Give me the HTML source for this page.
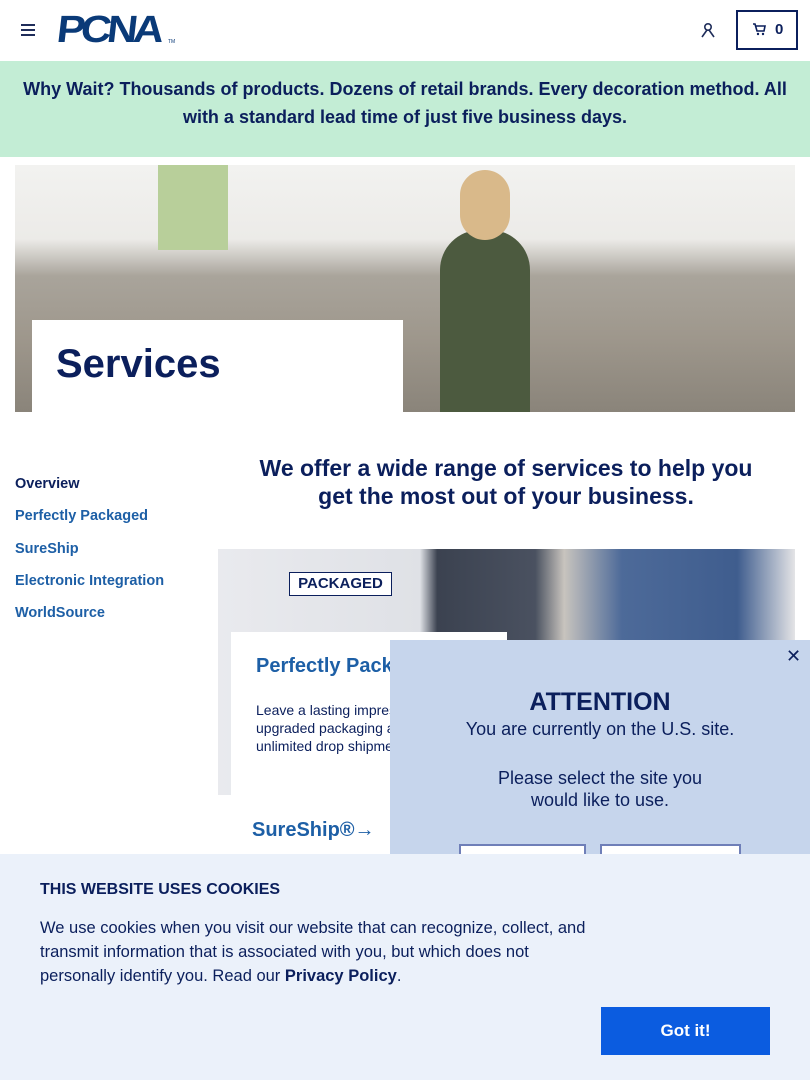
<!DOCTYPE html>
<html><head><meta charset="utf-8"><style>
*{margin:0;padding:0;box-sizing:border-box}
body{width:810px;height:1080px;overflow:hidden;position:relative;font-family:"Liberation Sans","DejaVu Sans",sans-serif;background:#fff;color:#0b1f5c}
.abs{position:absolute}
</style></head><body>
<div class="abs" style="left:21px;top:24px;width:14px;height:12px;border-top:2px solid #1f2d5a;border-bottom:2px solid #1f2d5a"><div style="margin-top:3px;height:2px;background:#1f2d5a"></div></div>
<div class="abs" style="left:57px;top:9px;font:900 38px 'Liberation Sans',sans-serif;color:#0a3a78;letter-spacing:-4px;transform:scaleX(1.12) skewX(-6deg);transform-origin:left">PCNA</div>
<div class="abs" style="left:168px;top:39px;font-size:5px;color:#0a3a78">TM</div>
<svg class="abs" style="left:700px;top:22px" width="16" height="16" viewBox="0 0 16 16"><circle cx="8" cy="5" r="3.2" fill="none" stroke="#1f2d5a" stroke-width="1.6"/><path d="M2 15 L7 8 M14 15 L9 8" stroke="#1f2d5a" stroke-width="1.6" fill="none"/></svg>
<div class="abs" style="left:736px;top:10px;width:62px;height:40px;border:2px solid #0b1f5c"></div>
<svg class="abs" style="left:752px;top:23px" width="14" height="13" viewBox="0 0 14 13"><path d="M1 1h2l2 7h7l1-5H4" fill="none" stroke="#0b1f5c" stroke-width="1.6"/><circle cx="6" cy="11" r="1.2" fill="#0b1f5c"/><circle cx="11" cy="11" r="1.2" fill="#0b1f5c"/></svg>
<div class="abs" style="left:775px;top:21px;font-weight:700;font-size:15px;color:#0b1f5c">0</div>
<div class="abs" style="left:0;top:61px;width:810px;height:96px;background:#c3edd5"></div>
<div class="abs" style="left:10px;top:75px;width:790px;text-align:center;font-weight:700;font-size:18px;line-height:28px;color:#0b1f5c">Why Wait? Thousands of products. Dozens of retail brands. Every decoration method. All<br>with a standard lead time of just five business days.</div>
<div class="abs" style="left:15px;top:165px;width:780px;height:247px;background:linear-gradient(180deg,#f2f2f0 0%,#ecebe8 30%,#a9a49b 45%,#9e978c 70%,#8a847a 100%)"></div>
<div class="abs" style="left:158px;top:165px;width:70px;height:85px;background:#b8cf9a"></div>
<div class="abs" style="left:440px;top:230px;width:90px;height:182px;background:#4c5a3f;border-radius:40px 40px 0 0"></div>
<div class="abs" style="left:460px;top:170px;width:50px;height:70px;background:#d9b98a;border-radius:25px"></div>
<div class="abs" style="left:32px;top:320px;width:371px;height:92px;background:#fff"></div>
<div class="abs" style="left:56px;top:342px;font-weight:700;font-size:40px;color:#0b1f5c">Services</div>
<div class="abs" style="left:15px;top:468px;font-size:14.5px;line-height:32.3px;font-weight:700;color:#1d5fa6">
<div style="color:#0b1f5c">Overview</div><div>Perfectly Packaged</div><div>SureShip</div><div>Electronic Integration</div><div>WorldSource</div></div>
<div class="abs" style="left:206px;top:454px;width:600px;text-align:center;font-weight:700;font-size:23px;line-height:28px;color:#0b1f5c">We offer a wide range of services to help you<br>get the most out of your business.</div>
<div class="abs" style="left:218px;top:549px;width:577px;height:246px;background:linear-gradient(90deg,#e9eaee 0%,#dfe1e6 35%,#3b4250 38%,#4a5160 55%,#c8c4be 60%,#4d6a99 70%,#3f5d8e 90%,#e4e4e6 100%)"></div>
<div class="abs" style="left:289px;top:572px;width:103px;height:24px;border:1.5px solid #0b1f5c;background:#fff;font-weight:700;font-size:15px;color:#0b1f5c;text-align:center;line-height:22px">PACKAGED</div>
<div class="abs" style="left:231px;top:632px;width:276px;height:225px;background:#fff"></div>
<div class="abs" style="left:256px;top:655px;font-weight:700;font-size:20px;color:#1d5fa6">Perfectly Packaged</div>
<div class="abs" style="left:256px;top:701px;font-size:14px;line-height:18px;color:#0b1f5c">Leave a lasting impression with<br>upgraded packaging and<br>unlimited drop shipments.</div>
<div class="abs" style="left:252px;top:819px;font-weight:700;font-size:20px;color:#1d5fa6">SureShip®→</div>
<div class="abs" style="left:390px;top:640px;width:420px;height:220px;background:#c6d5ec"></div>
<div class="abs" style="left:786px;top:646px;font-size:18px;color:#0b1f5c">✕</div>
<div class="abs" style="left:390px;top:686px;width:420px;text-align:center;color:#0b1f5c">
<div style="font-weight:700;font-size:25px;line-height:32px">ATTENTION</div>
<div style="font-size:18px;line-height:22px">You are currently on the U.S. site.</div>
<div style="font-size:18px;line-height:22px;margin-top:27px">Please select the site you<br>would like to use.</div></div>
<div class="abs" style="left:459px;top:844px;width:127px;height:20px;border:2px solid #6f7fb8;background:#fff"></div>
<div class="abs" style="left:600px;top:844px;width:141px;height:20px;border:2px solid #6f7fb8;background:#fff"></div>
<div class="abs" style="left:0;top:854px;width:810px;height:226px;background:#ebf1fa"></div>
<div class="abs" style="left:40px;top:881px;font-weight:700;font-size:16px;color:#0b1f5c">THIS WEBSITE USES COOKIES</div>
<div class="abs" style="left:40px;top:916px;width:640px;font-size:16.5px;line-height:24px;color:#0b1f5c">We use cookies when you visit our website that can recognize, collect, and<br>transmit information that is associated with you, but which does not<br>personally identify you. Read our <b>Privacy Policy</b>.</div>
<div class="abs" style="left:601px;top:1007px;width:169px;height:48px;background:#0b5ce0;color:#fff;font-weight:700;font-size:17px;text-align:center;line-height:48px">Got it!</div>
</body></html>
